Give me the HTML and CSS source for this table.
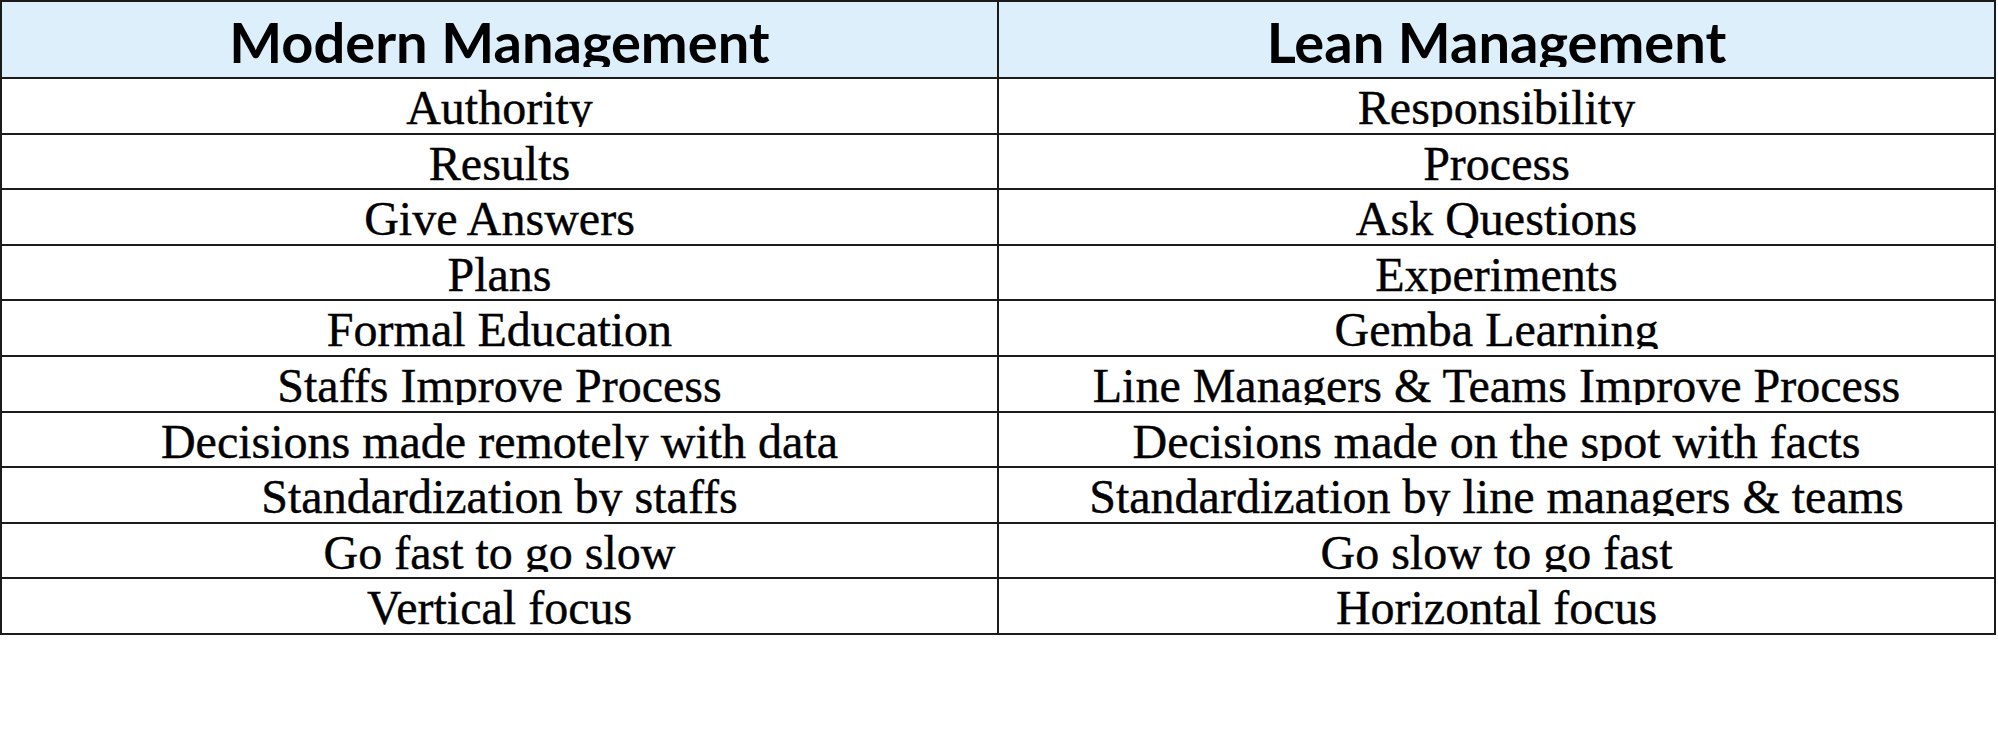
FILE: index.html
```html
<!DOCTYPE html>
<html lang="en">
<head>
<meta charset="utf-8">
<title>Modern vs Lean Management</title>
<link rel="stylesheet" href="styles.css">
</head>
<body>
<div class="table">
  <div class="cell head"><div class="clip">Modern Management</div></div>
  <div class="cell head"><div class="clip">Lean Management</div></div>

  <div class="cell"><div class="clip">Authority</div></div>
  <div class="cell"><div class="clip">Responsibility</div></div>

  <div class="cell"><div class="clip">Results</div></div>
  <div class="cell"><div class="clip">Process</div></div>

  <div class="cell"><div class="clip">Give Answers</div></div>
  <div class="cell"><div class="clip">Ask Questions</div></div>

  <div class="cell"><div class="clip">Plans</div></div>
  <div class="cell"><div class="clip">Experiments</div></div>

  <div class="cell"><div class="clip">Formal Education</div></div>
  <div class="cell"><div class="clip">Gemba Learning</div></div>

  <div class="cell"><div class="clip">Staffs Improve Process</div></div>
  <div class="cell"><div class="clip">Line Managers &amp; Teams Improve Process</div></div>

  <div class="cell"><div class="clip">Decisions made remotely with data</div></div>
  <div class="cell"><div class="clip">Decisions made on the spot with facts</div></div>

  <div class="cell"><div class="clip">Standardization by staffs</div></div>
  <div class="cell"><div class="clip">Standardization by line managers &amp; teams</div></div>

  <div class="cell"><div class="clip">Go fast to go slow</div></div>
  <div class="cell"><div class="clip">Go slow to go fast</div></div>

  <div class="cell"><div class="clip">Vertical focus</div></div>
  <div class="cell"><div class="clip">Horizontal focus</div></div>
</div>
</body>
</html>
```

FILE: styles.css
```css
html, body {
  margin: 0;
  padding: 0;
  background: #ffffff;
}

.table {
  display: grid;
  grid-template-columns: 997px 997px;
  grid-template-rows: 77px repeat(10, 55.6px);
  width: 1994px;
  border-left: 2px solid #1b1b1b;
  border-top: 2px solid #1b1b1b;
  color: #000000;
}

.cell {
  border-right: 2px solid #1b1b1b;
  border-bottom: 2px solid #1b1b1b;
  text-align: center;
  overflow: hidden;
}

.clip {
  height: 48px;
  overflow: hidden;
  font-family: "Liberation Serif", "DejaVu Serif", serif;
  font-size: 48px;
  line-height: 57.5px;
  white-space: nowrap;
  -webkit-text-stroke: 0.4px #000000;
}

.head {
  background: #ddeffa;
}

.head .clip {
  height: 65px;
  font-family: Lato, "Open Sans", sans-serif;
  font-weight: 700;
  font-size: 56px;
  line-height: 79px;
  -webkit-text-stroke: 0;
}
```
